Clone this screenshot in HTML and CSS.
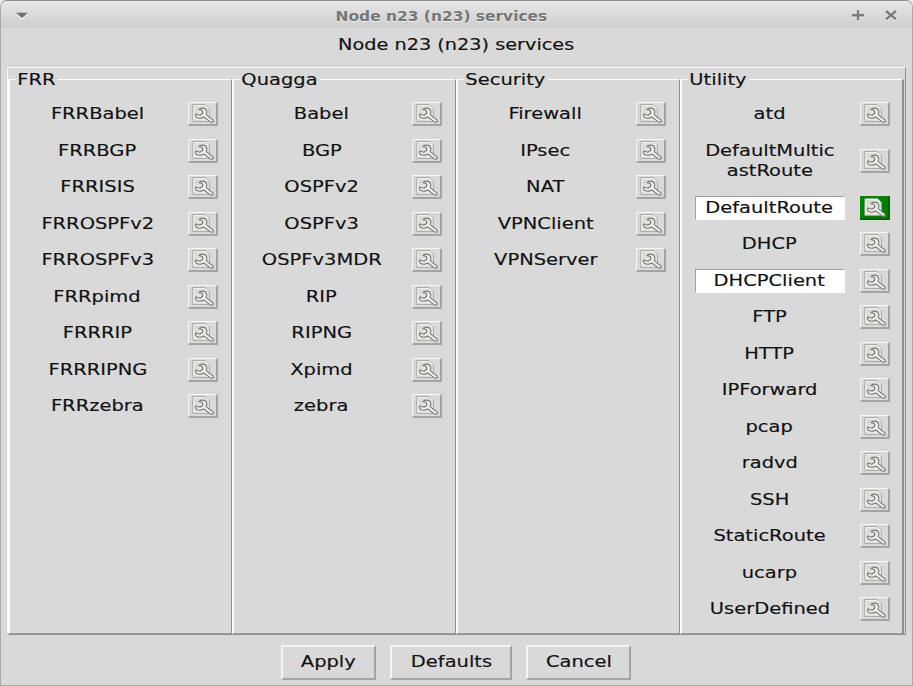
FILE: index.html
```html
<!DOCTYPE html>
<html lang="en">
<head>
<meta charset="utf-8">
<title>Node n23 (n23) services</title>
<link rel="stylesheet" href="styles.css">
</head>
<body>
<svg class="defs" width="0" height="0" aria-hidden="true">
  <defs>
    <linearGradient id="paper" x1="0" y1="0" x2="1" y2="1"><stop offset="0" stop-color="#d2d5cf"/><stop offset="1" stop-color="#f1f2ef"/></linearGradient>
  </defs>
  <symbol id="edit" viewBox="0 0 26 20">
    <path d="M3.8 1.6 H16.4 L20.4 5.4 V18.4 H3.8 Z" fill="url(#paper)" stroke="#a0a29c" stroke-width=".9" stroke-linejoin="round"/>
    <path d="M4.9 17.6 V2.6 H16" fill="none" stroke="#fbfbfa" stroke-width=".8"/>
    <path d="M16.2 1.6 L20.4 5.6 L16 5 Z" fill="#fafafa" stroke="#b9bab6" stroke-width=".5"/>
    <path d="M10 6.4 Q13.6 3.9 16.6 6.2 Q18.8 8.6 17.2 11.6 L23.8 16.9 Q25 18.6 23.2 19.3 Q21.6 19.4 20.6 18.4 L14.8 14 Q11 16.4 7.4 14.2 Q6 12.8 6.6 10.9 L11 12.3 L14 10 L13.4 7.6 Z" fill="#eceeea" stroke="#777975" stroke-width="1.1" stroke-linejoin="round"/>
  </symbol>
</svg>
<div class="window">
  <header class="titlebar">
    <svg class="menu" width="14" height="8" viewBox="0 0 14 8"><path d="M1 1.8 H13 L7 7.5 Z" fill="#f3f3f3"/><path d="M1 .8 H13 L7 6 Z" fill="#707070"/></svg>
    <h1><span>Node n23 (n23) services</span></h1>
    <svg class="ctl" width="46" height="14" viewBox="0 0 46 14"><g fill="none" stroke-width="2.4"><path d="M0 7.2 H12 M6 2 V12" stroke="#eee"/><path d="M0 6.2 H12 M6 1.2 V11.2" stroke="#7c7c7c"/><path d="M34 2.9 L44 11.4 M44 2.9 L34 11.4" stroke="#eee"/><path d="M34 2 L44 10.4 M44 2 L34 10.4" stroke="#7c7c7c"/></g></svg>
  </header>
  <p class="caption"><span>Node n23 (n23) services</span></p>
  <main class="groups">
    <section><h2>FRR</h2><ul>
      <li><b><span>FRRBabel</span></b><button><svg><use href="#edit"/></svg></button></li>
      <li><b><span>FRRBGP</span></b><button><svg><use href="#edit"/></svg></button></li>
      <li><b><span>FRRISIS</span></b><button><svg><use href="#edit"/></svg></button></li>
      <li><b><span>FRROSPFv2</span></b><button><svg><use href="#edit"/></svg></button></li>
      <li><b><span>FRROSPFv3</span></b><button><svg><use href="#edit"/></svg></button></li>
      <li><b><span>FRRpimd</span></b><button><svg><use href="#edit"/></svg></button></li>
      <li><b><span>FRRRIP</span></b><button><svg><use href="#edit"/></svg></button></li>
      <li><b><span>FRRRIPNG</span></b><button><svg><use href="#edit"/></svg></button></li>
      <li><b><span>FRRzebra</span></b><button><svg><use href="#edit"/></svg></button></li>
    </ul></section>
    <section><h2>Quagga</h2><ul>
      <li><b><span>Babel</span></b><button><svg><use href="#edit"/></svg></button></li>
      <li><b><span>BGP</span></b><button><svg><use href="#edit"/></svg></button></li>
      <li><b><span>OSPFv2</span></b><button><svg><use href="#edit"/></svg></button></li>
      <li><b><span>OSPFv3</span></b><button><svg><use href="#edit"/></svg></button></li>
      <li><b><span>OSPFv3MDR</span></b><button><svg><use href="#edit"/></svg></button></li>
      <li><b><span>RIP</span></b><button><svg><use href="#edit"/></svg></button></li>
      <li><b><span>RIPNG</span></b><button><svg><use href="#edit"/></svg></button></li>
      <li><b><span>Xpimd</span></b><button><svg><use href="#edit"/></svg></button></li>
      <li><b><span>zebra</span></b><button><svg><use href="#edit"/></svg></button></li>
    </ul></section>
    <section><h2>Security</h2><ul>
      <li><b><span>Firewall</span></b><button><svg><use href="#edit"/></svg></button></li>
      <li><b><span>IPsec</span></b><button><svg><use href="#edit"/></svg></button></li>
      <li><b><span>NAT</span></b><button><svg><use href="#edit"/></svg></button></li>
      <li><b><span>VPNClient</span></b><button><svg><use href="#edit"/></svg></button></li>
      <li><b><span>VPNServer</span></b><button><svg><use href="#edit"/></svg></button></li>
    </ul></section>
    <section><h2>Utility</h2><ul>
      <li><b><span>atd</span></b><button><svg><use href="#edit"/></svg></button></li>
      <li class="tall"><b><span>DefaultMultic<br>astRoute</span></b><button><svg><use href="#edit"/></svg></button></li>
      <li><b class="on"><span>DefaultRoute</span></b><button class="custom"><svg><use href="#edit"/></svg></button></li>
      <li><b><span>DHCP</span></b><button><svg><use href="#edit"/></svg></button></li>
      <li><b class="on"><span>DHCPClient</span></b><button><svg><use href="#edit"/></svg></button></li>
      <li><b><span>FTP</span></b><button><svg><use href="#edit"/></svg></button></li>
      <li><b><span>HTTP</span></b><button><svg><use href="#edit"/></svg></button></li>
      <li><b><span>IPForward</span></b><button><svg><use href="#edit"/></svg></button></li>
      <li><b><span>pcap</span></b><button><svg><use href="#edit"/></svg></button></li>
      <li><b><span>radvd</span></b><button><svg><use href="#edit"/></svg></button></li>
      <li><b><span>SSH</span></b><button><svg><use href="#edit"/></svg></button></li>
      <li><b><span>StaticRoute</span></b><button><svg><use href="#edit"/></svg></button></li>
      <li><b><span>ucarp</span></b><button><svg><use href="#edit"/></svg></button></li>
      <li><b><span>UserDefined</span></b><button><svg><use href="#edit"/></svg></button></li>
    </ul></section>
  </main>
  <footer class="actions">
    <button class="apply"><span>Apply</span></button>
    <button class="defaults"><span>Defaults</span></button>
    <button class="cancel"><span>Cancel</span></button>
  </footer>
</div>
</body>
</html>
```
FILE: styles.css
```css
* { box-sizing: border-box; margin: 0; padding: 0; }
body { width: 913px; height: 686px; overflow: hidden; background: #ededed; font: 16.5px/20px "DejaVu Sans", sans-serif; color: #111; }
.defs { display: block; width: 0; height: 0; }
.window { width: 913px; height: 686px; display: flex; flex-direction: column; background: #d9d9d9; border: 1px solid #a9a9a9; border-top-color: #8c8c8c; border-radius: 7px 7px 0 0; overflow: hidden; }
span { display: inline-block; transform: scaleX(1.18); white-space: nowrap; -webkit-text-stroke: .15px #111; }
.titlebar { height: 27px; flex: none; display: flex; justify-content: space-between; align-items: center; padding: 2px 14px 0; background: linear-gradient(#e6e6e6, #cecece); border-top: 1px solid #eee; }
h1 { width: 300px; text-align: center; font-size: 14.5px; line-height: 20px; color: #777; text-shadow: 0 1px #eee; margin-left: 2px; }
h1 span { transform: scaleX(1.065); -webkit-text-stroke: 0; }
.caption { height: 39px; flex: none; text-align: center; padding-top: 7px; }
.caption span { transform: scaleX(1.168); }
.groups { height: 568px; width: 899px; flex: none; margin-left: 6px; display: grid; grid-template-columns: repeat(4, 224px); border: 1px solid; border-color: #f6f6f6 #8d8d8d #8d8d8d #f6f6f6; }
section { margin-top: 11px; border: solid; border-width: 1px 1px 1px 2px; border-color: #fff #8d8d8d #9d9d9d #fdfdfd; }
section:last-child { border-right-width: 2px; }
h2 { font-size: 16.5px; font-weight: 400; line-height: 20px; width: max-content; margin: -10px 0 6px 5px; padding: 0 2px; background: #d9d9d9; transform: scaleX(1.18); transform-origin: 0 50%; -webkit-text-stroke: .15px #111; }
ul { list-style: none; }
li { height: 36.53px; display: flex; align-items: center; }
li.tall { height: 57px; }
b { width: 150px; height: 24px; margin: 0 15px 0 13px; padding-right: 1px; font-weight: 400; text-align: center; line-height: 20px; border: 1px solid transparent; display: flex; align-items: center; justify-content: center; }
b.on { background: #fff; border-color: #a0a0a0 #fff #fff #a0a0a0; }
li button { width: 30px; height: 24px; flex: none; border: solid; border-width: 1px 2px 2px 1px; border-color: #f7f7f7 #a4a4a4 #a4a4a4 #f7f7f7; background: #d9d9d9; display: flex; }
li button svg { width: 26px; height: 20px; }
li button.custom { background: #008000; border-color: #008f00 #006400 #006400 #008f00; }
.actions { display: flex; padding: 10px 0 0 280px; }
.actions button { height: 35px; font: inherit; color: inherit; background: #d9d9d9; border: 2px solid; border-color: #f5f5f5 #a4a4a4 #a4a4a4 #f5f5f5; padding-bottom: 1px; }
.apply { width: 95px; margin-right: 14px; }
.defaults { width: 122px; margin-right: 14px; }
.cancel { width: 105px; }
```
